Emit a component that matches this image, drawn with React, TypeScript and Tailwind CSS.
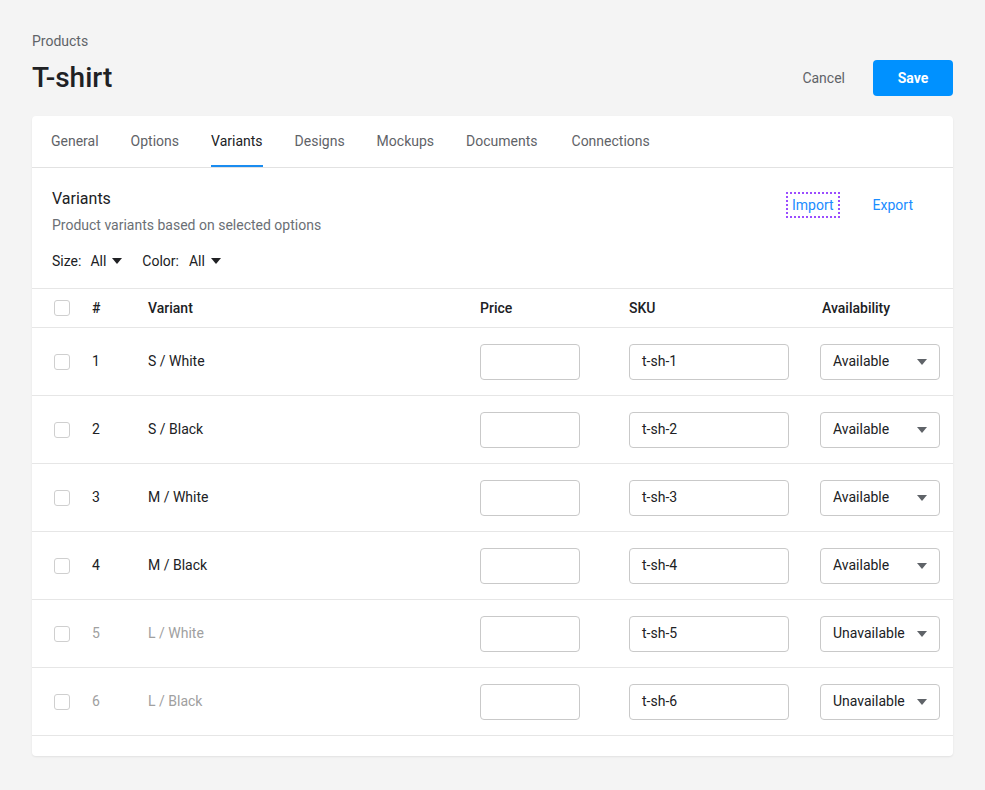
import React from "react";

const rows = [
  { n: 1, v: "S / White", sku: "t-sh-1", a: "Available", dim: false },
  { n: 2, v: "S / Black", sku: "t-sh-2", a: "Available", dim: false },
  { n: 3, v: "M / White", sku: "t-sh-3", a: "Available", dim: false },
  { n: 4, v: "M / Black", sku: "t-sh-4", a: "Available", dim: false },
  { n: 5, v: "L / White", sku: "t-sh-5", a: "Unavailable", dim: true },
  { n: 6, v: "L / Black", sku: "t-sh-6", a: "Unavailable", dim: true },
];

const tabs = ["General", "Options", "Variants", "Designs", "Mockups", "Documents", "Connections"];

function Caret({ className = "" }: { className?: string }) {
  return (
    <svg width="10" height="6" viewBox="0 0 10 6" className={className}>
      <path d="M0 0 L10 0 L5 6 Z" fill="currentColor" />
    </svg>
  );
}

function Checkbox() {
  return <div className="w-4 h-4 rounded-[3px] border border-[#cfcfcf] bg-white" />;
}

export default function App() {
  return (
    <div
      className="min-h-[790px] bg-[#f4f4f4] px-8 pt-[32px] pb-[34px] text-[#202124]"
      style={{ fontFamily: "Roboto, 'Noto Sans', sans-serif" }}
    >
      <div className="text-[14px] leading-[18px] text-[#5f6368]">Products</div>
      <div className="flex items-center justify-between mt-[10px]">
        <h1 className="text-[28px] leading-[36px] font-medium text-[#202124]">T-shirt</h1>
        <div className="flex items-center">
          <button className="text-[14px] text-[#5f6368] mr-[28px]">Cancel</button>
          <button className="w-[80px] h-[36px] rounded-[4px] bg-[#0091ff] text-white text-[14px] font-bold">
            Save
          </button>
        </div>
      </div>

      <div className="mt-[20px] bg-white rounded-[4px] shadow-[0_1px_2px_rgba(0,0,0,0.08)] pb-[20px]">
        <div className="flex gap-8 px-[19px] border-b border-[#e2e2e2] h-[52px]">
          {tabs.map((t) => (
            <div
              key={t}
              className={
                "relative flex items-center text-[14px] " +
                (t === "Variants" ? "text-[#202124]" : "text-[#5f6368]") +
                (t === "Connections" ? " ml-[2px]" : "")
              }
            >
              {t}
              {t === "Variants" && (
                <div className="absolute left-0 right-0 bottom-0 h-[2px] bg-[#1a8cf0]" />
              )}
            </div>
          ))}
        </div>

        <div className="flex justify-between px-5 pt-[20px]">
          <div>
            <div className="text-[16px] leading-[22px] text-[#202124]">Variants</div>
            <div className="text-[14px] leading-[20px] mt-[5px] text-[#6b6f75]">
              Product variants based on selected options
            </div>
            <div className="flex items-center text-[14px] leading-[20px] mt-[16px] text-[#202124]">
              <span>Size:</span>
              <span className="ml-[9px]">All</span>
              <Caret className="ml-[6px] text-[#202124]" />
              <span className="ml-[20px]">Color:</span>
              <span className="ml-[10px]">All</span>
              <Caret className="ml-[6px] text-[#202124]" />
            </div>
          </div>
          <div className="flex items-start pt-[6px] pr-[20px]">
            <button className="text-[14px] leading-[18px] text-[#1a8cff] px-[4px] py-[2px] outline-2 outline-dotted outline-[#9b4dff]">
              Import
            </button>
            <button className="ml-[35px] text-[14px] leading-[18px] text-[#1a8cff] py-[2px]">
              Export
            </button>
          </div>
        </div>

        <div className="mt-[17px] border-t border-[#e6e6e6]">
          <div className="flex items-center h-[39px] border-b border-[#e6e6e6] text-[14px] font-medium text-[#202124]">
            <div className="w-[60px] pl-[22px]"><Checkbox /></div>
            <div className="w-[56px]">#</div>
            <div className="w-[332px]">Variant</div>
            <div className="w-[149px]">Price</div>
            <div className="w-[191px]">SKU</div>
            <div className="w-[120px] pl-[2px]">Availability</div>
          </div>
          {rows.map((r) => (
            <div
              key={r.n}
              className={
                "flex items-center h-[68px] border-b border-[#e6e6e6] text-[14px] " +
                (r.dim ? "text-[#a0a0a0]" : "text-[#202124]")
              }
            >
              <div className="w-[60px] pl-[22px]"><Checkbox /></div>
              <div className="w-[56px]">{r.n}</div>
              <div className="w-[332px]">{r.v}</div>
              <div className="w-[149px]">
                <div className="w-[100px] h-[36px] rounded-[4px] border border-[#c9c9c9]" />
              </div>
              <div className="w-[191px]">
                <div className="w-[160px] h-[36px] rounded-[4px] border border-[#c9c9c9] flex items-center px-[12px] text-[#202124]">
                  {r.sku}
                </div>
              </div>
              <div className="w-[120px]">
                <div className="w-[120px] h-[36px] rounded-[4px] border border-[#c9c9c9] flex items-center justify-between pl-[12px] pr-[12px] text-[#202124]">
                  <span>{r.a}</span>
                  <Caret className="text-[#5f6368]" />
                </div>
              </div>
            </div>
          ))}
        </div>
      </div>
    </div>
  );
}
